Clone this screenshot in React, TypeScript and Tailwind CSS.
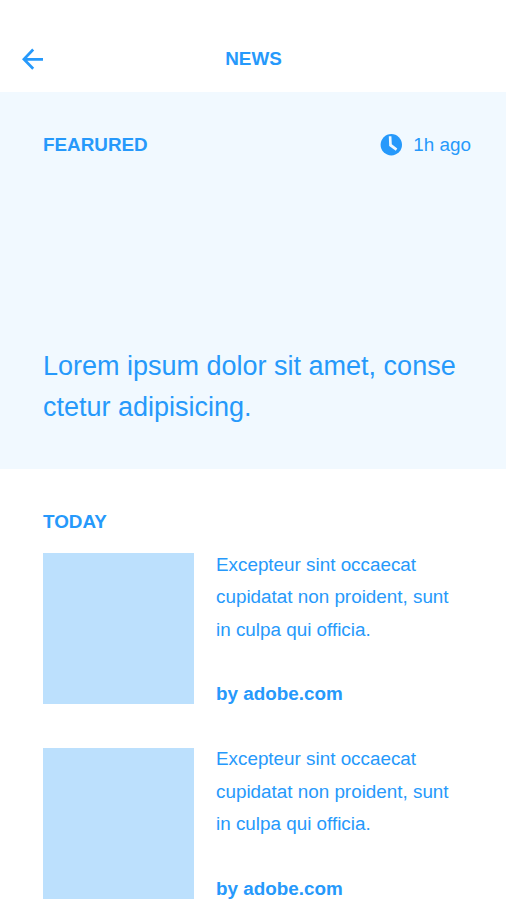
const articles = [1, 2];

function Article() {
  return (
    <article className="flex h-[194.3px] shrink-0 items-start">
      <div className="size-[151px] shrink-0 bg-[#bce0fd]" />
      <div className="ml-[22px] text-[18.85px] leading-[32.4px]">
        <p className="-mt-[4.4px] whitespace-nowrap">
          Excepteur sint occaecat
          <br />
          cupidatat non proident, sunt
          <br />
          in culpa qui officia.
        </p>
        <p className="mt-8 text-[18.85px] font-bold">by adobe.com</p>
      </div>
    </article>
  );
}

export default function App() {
  return (
    <main className="flex h-[900px] w-[506px] flex-col overflow-hidden bg-white font-['Liberation_Sans',sans-serif] text-[#2699fb]">
      <header className="grid h-[92px] shrink-0 grid-cols-[1fr_auto_1fr] items-center pr-[21px] pl-[22px] pt-[26px]">
        <svg width="22" height="22" viewBox="0 0 22 22" fill="none" stroke="currentColor" strokeWidth="2.7">
          <path d="M21 11.3H1.9M11.2 1.5L1.9 11.3L11.2 20.8" />
        </svg>
        <h1 className="text-[18.85px] font-bold">NEWS</h1>
      </header>
      <section className="flex h-[377px] shrink-0 flex-col bg-[#f1f9ff] pr-[35px] pl-[43px]">
        <div className="flex h-[106px] items-center justify-between text-[18.85px]">
          <h2 className="font-bold">FEARURED</h2>
          <div className="flex items-center gap-[11px]">
            <svg width="22" height="22" viewBox="0 0 22 22">
              <circle cx="11.3" cy="10.7" r="10.7" fill="currentColor" />
              <path d="M8.8 2.2H11.4L11.8 10.2L17.3 14.6L15.8 16.7L9.2 12.1Z" fill="#f1f9ff" />
            </svg>
            <span>1h ago</span>
          </div>
        </div>
        <p className="mt-[148px] text-[27px] leading-[41px] whitespace-nowrap">
          Lorem ipsum dolor sit amet, conse
          <br />
          ctetur adipisicing.
        </p>
      </section>
      <section className="flex flex-col px-[43px] pt-[39px]">
        <h2 className="mb-[17.4px] text-[18.85px] leading-7 font-bold">TODAY</h2>
        {articles.map((id) => <Article key={id} />)}
      </section>
    </main>
  );
}
